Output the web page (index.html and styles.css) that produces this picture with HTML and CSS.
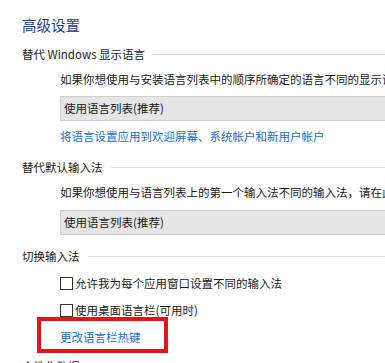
FILE: index.html
```html
<!DOCTYPE html>
<html lang="zh-CN">
<head>
<meta charset="utf-8">
<title>高级设置</title>
<link rel="stylesheet" href="styles.css">
</head>
<body>
<div class="page">
  <div class="title">高级设置</div>

  <div class="group-head h1">替代 Windows 显示语言</div>
  <div class="indent desc d1">如果你想使用与安装语言列表中的顺序所确定的语言不同的显示语言，请在此处选择</div>
  <div class="indent select s1">使用语言列表(推荐)</div>
  <div class="indent link l1">将语言设置应用到欢迎屏幕、系统帐户和新用户帐户</div>

  <div class="group-head h2">替代默认输入法</div>
  <div class="indent desc d2">如果你想使用与语言列表上的第一个输入法不同的输入法，请在此处选择</div>
  <div class="indent select s2">使用语言列表(推荐)</div>

  <div class="group-head h3">切换输入法</div>
  <div class="indent check c1"><span class="box"></span><span>允许我为每个应用窗口设置不同的输入法</span></div>
  <div class="indent check c2"><span class="box"></span><span>使用桌面语言栏(可用时)</span></div>
  <div class="highlight"><span class="link">更改语言栏热键</span></div>

  <div class="group-head h4">个性化数据</div>
</div>
</body>
</html>
```

FILE: styles.css
```css
html, body {
  margin: 0;
  padding: 0;
  background: #ffffff;
  overflow: hidden;
}

body {
  width: 385px;
  height: 363px;
  font-family: "Noto Sans CJK SC", "Noto Sans", sans-serif;
  font-size: 11.5px;
  color: #1a1a1a;
}

.page {
  padding: 15px 0 0 22px;
}

.title {
  font-size: 14.5px;
  line-height: 20px;
  height: 20px;
  color: #22409a;
}

.group-head {
  display: flex;
  align-items: center;
  line-height: 16px;
  height: 16px;
  white-space: nowrap;
  color: #1a1a1a;
}

.group-head::after {
  content: "";
  flex: 1;
  border-top: 1px solid #dcdcdc;
  margin-left: 8px;
}

.h1 { margin-top: 11px; }
.h2 { margin-top: 15px; }
.h3 { margin-top: 13px; }
.h4 { margin-top: 5px; }

.indent {
  margin-left: 38px;
}

.desc {
  line-height: 16px;
  height: 16px;
  white-space: nowrap;
  overflow: hidden;
}

.d1 { margin-top: 9px; }
.d2 { margin-top: 9px; }

.select {
  box-sizing: border-box;
  width: 400px;
  height: 25px;
  line-height: 23px;
  padding-left: 3px;
  background: #e5e5e5;
  border: 1px solid #cdcdcd;
  white-space: nowrap;
}

.s1 { margin-top: 9px; }
.s2 { margin-top: 10px; }

.link {
  color: #1c6fc9;
  line-height: 16px;
  white-space: nowrap;
}

.l1 {
  height: 16px;
  margin-top: 7px;
}

.check {
  display: flex;
  align-items: center;
  gap: 2px;
  line-height: 16px;
  height: 16px;
  white-space: nowrap;
}

.c1 { margin-top: 11px; }
.c2 { margin-top: 11px; }

.box {
  box-sizing: border-box;
  width: 13px;
  height: 13px;
  border: 1px solid #333333;
  background: #ffffff;
  flex: none;
}

.highlight {
  box-sizing: border-box;
  margin-top: -1px;
  margin-left: 15px;
  width: 131px;
  height: 36px;
  border: 4px solid #e3141b;
  padding: 4px 0 0 19px;
}

.highlight .link {
  display: block;
  line-height: 24px;
}
```
